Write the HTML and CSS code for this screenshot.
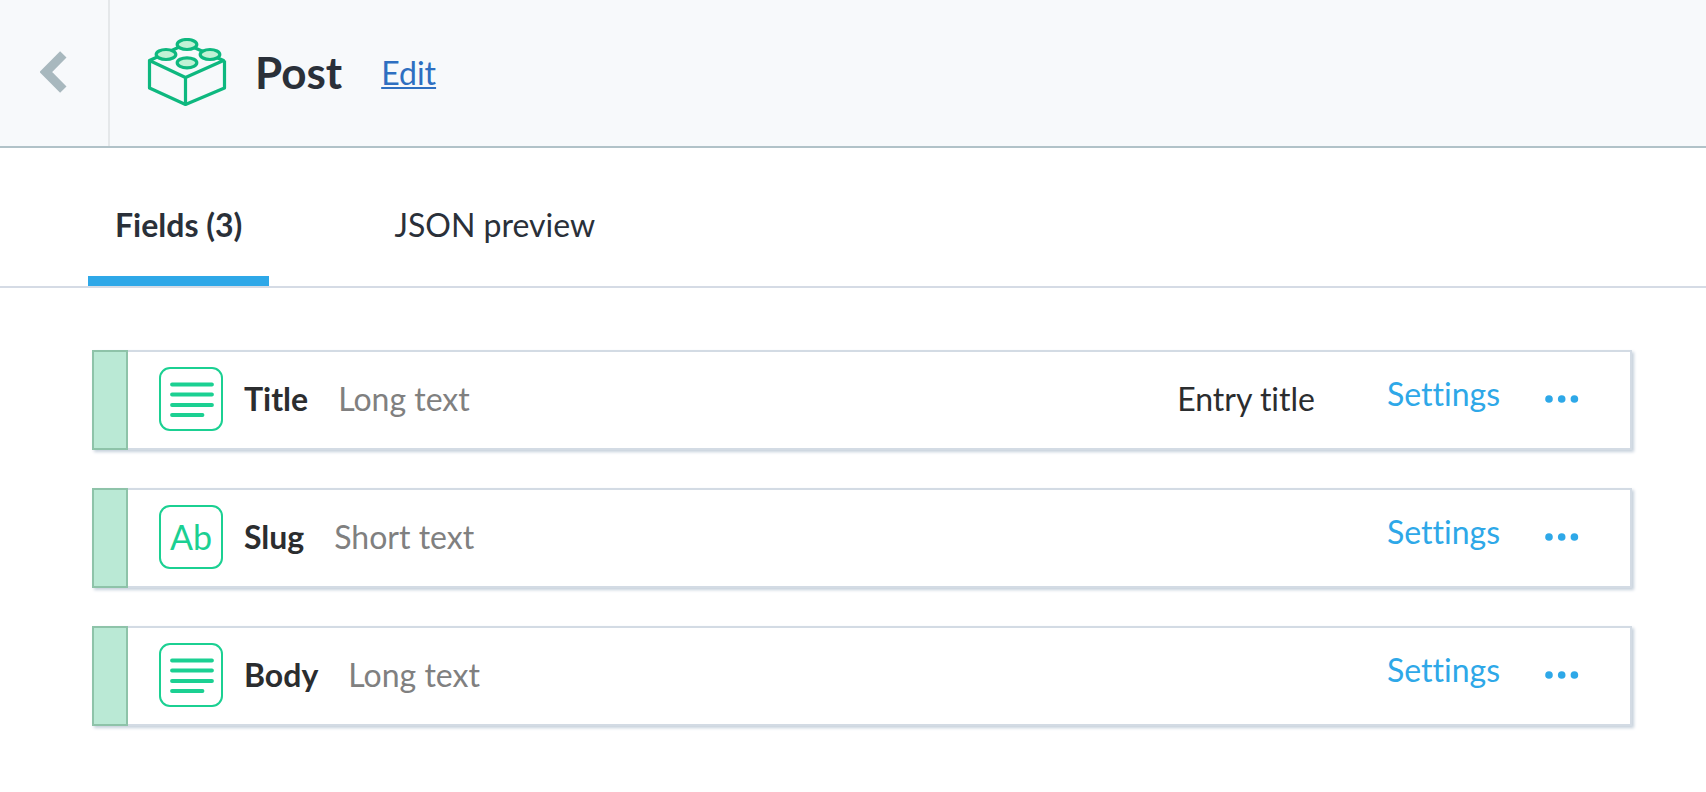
FILE: index.html
```html
<!DOCTYPE html>
<html lang="en">
<head>
<meta charset="utf-8">
<meta name="viewport" content="width=device-width, initial-scale=1">
<title>Post</title>
<link rel="stylesheet" href="styles.css">
</head>
<body>
<header class="topbar">
  <button class="back" type="button" aria-label="Back">
    <svg width="28" height="44" viewBox="0 0 28 44" fill="none"><path d="M23.300 4.300L5.800 22L23.300 39.700" stroke="#a8b8be" stroke-width="9" stroke-linejoin="miter"/></svg>
  </button>
  <div class="heading">
    <svg class="brick" width="80" height="70" viewBox="0 0 80 70" fill="none" stroke="#0eb87f" stroke-width="3.200" stroke-linejoin="round">
      <path d="M2.500 22.500L39 6L76.500 22.500L38.500 39.500Z"/>
      <path d="M2.500 22.500V50L38.500 66.500L77.500 50V22.500M38.500 39.500V66.500"/>
      <g fill="#c1f2d5">
        <ellipse cx="40" cy="6.500" rx="9.800" ry="5"/>
        <ellipse cx="19" cy="16.500" rx="9.800" ry="5"/>
        <ellipse cx="63" cy="16.500" rx="9.800" ry="5"/>
        <ellipse cx="40" cy="24.800" rx="9.800" ry="5"/>
      </g>
    </svg>
    <h1 class="title">Post</h1>
    <a class="edit" href="#">Edit</a>
  </div>
</header>
<nav class="tabs">
  <a class="tab tab-active" href="#" aria-current="page">Fields (3)</a>
  <a class="tab" href="#">JSON preview</a>
</nav>
<main>
  <ul class="fields">
    <li class="field">
      <span class="handle"></span>
      <svg class="type-icon" width="64" height="64" viewBox="0 0 64 64" fill="none" stroke="#1bd092"><rect x="1" y="1" width="62" height="62" rx="10" stroke-width="2"/><path d="M13 17.500H53M13 27.500H53M13 38H53M13 48H43.500" stroke-width="3.800" stroke-linecap="round"/></svg>
      <strong class="name">Title</strong>
      <span class="type">Long text</span>
      <span class="note">Entry title</span>
      <button class="settings" type="button">Settings</button>
      <button class="more" type="button" aria-label="More actions"><svg width="34" height="8" viewBox="0 0 34 8" fill="#2ea8e8"><circle cx="4" cy="4" r="3.800"/><circle cx="16.700" cy="4" r="3.800"/><circle cx="29.400" cy="4" r="3.800"/></svg></button>
    </li>
    <li class="field">
      <span class="handle"></span>
      <span class="type-icon type-short">Ab</span>
      <strong class="name">Slug</strong>
      <span class="type">Short text</span>
      <button class="settings" type="button">Settings</button>
      <button class="more" type="button" aria-label="More actions"><svg width="34" height="8" viewBox="0 0 34 8" fill="#2ea8e8"><circle cx="4" cy="4" r="3.800"/><circle cx="16.700" cy="4" r="3.800"/><circle cx="29.400" cy="4" r="3.800"/></svg></button>
    </li>
    <li class="field">
      <span class="handle"></span>
      <svg class="type-icon" width="64" height="64" viewBox="0 0 64 64" fill="none" stroke="#1bd092"><rect x="1" y="1" width="62" height="62" rx="10" stroke-width="2"/><path d="M13 17.500H53M13 27.500H53M13 38H53M13 48H43.500" stroke-width="3.800" stroke-linecap="round"/></svg>
      <strong class="name">Body</strong>
      <span class="type">Long text</span>
      <button class="settings" type="button">Settings</button>
      <button class="more" type="button" aria-label="More actions"><svg width="34" height="8" viewBox="0 0 34 8" fill="#2ea8e8"><circle cx="4" cy="4" r="3.800"/><circle cx="16.700" cy="4" r="3.800"/><circle cx="29.400" cy="4" r="3.800"/></svg></button>
    </li>
  </ul>
</main>
</body>
</html>
```
FILE: styles.css
```css
* { box-sizing: border-box; }

body {
  margin: 0;
  background: #fff;
  color: #2a3039;
  font-family: Lato, "Open Sans", sans-serif;
  font-size: 32px;
  font-variant-ligatures: none;
  line-height: 40px;
}

button {
  padding: 0;
  border: 0;
  background: none;
  font: inherit;
  font-variant-ligatures: none;
  cursor: pointer;
}

.topbar {
  display: flex;
  height: 148px;
  background: #f7f9fb;
  border-bottom: 2px solid #b1c2c8;
}

.back {
  display: flex;
  align-items: center;
  width: 110px;
  padding-left: 40px;
  padding-bottom: 3px;
  border-right: 2px solid #e5e8ea;
}

.heading {
  display: flex;
  align-items: center;
  padding-left: 37px;
}

.brick { margin-right: 28px; }

.title {
  margin: 0 39px 0 0;
  padding-bottom: 2px;
  font-size: 44px;
  font-weight: 700;
  line-height: 56px;
}

.edit {
  color: #2e6fc1;
  text-decoration-thickness: 2px;
  text-underline-offset: 2px;
  text-decoration-skip-ink: none;
}

.tabs {
  display: flex;
  gap: 98px;
  height: 140px;
  padding-left: 88px;
  border-bottom: 2px solid #d5dbe5;
}

.tab {
  padding: 57px 27px 0;
  color: inherit;
  text-decoration: none;
}

.tab-active {
  border-bottom: 10px solid #2ea8e8;
  font-weight: 700;
}

.fields {
  display: flex;
  flex-direction: column;
  gap: 38px;
  margin: 0;
  padding: 62px 74px 62px 92px;
  list-style: none;
}

.field {
  display: flex;
  align-items: center;
  height: 100px;
  padding-right: 51px;
  background: linear-gradient(#d3dbe4, #d3dbe4) top / 100% 2px no-repeat #fff;
  border-right: 2px solid #d3dbe4;
  border-bottom: 2px solid #d3dbe4;
  box-shadow: 2px 2px 3px #c6d1dc;
  color: #2b2d2f;
}

.handle {
  align-self: stretch;
  width: 36px;
  margin: 0 31px -2px 0;
  background: #bae9d5;
  border: 2px solid #8ec3a9;
}

.type-icon {
  flex: none;
  width: 64px;
  height: 64px;
  margin-right: 21px;
}

.type-short {
  display: flex;
  align-items: center;
  justify-content: center;
  border: 2px solid #1bd092;
  border-radius: 11px;
  color: #1bd092;
  font-size: 34px;
}

.name { margin-right: 30px; }

.type {
  margin-right: auto;
  color: #808080;
}

.note { margin-right: 72px; }

.settings {
  padding-bottom: 10px;
  color: #2ea8e8;
}

.more {
  display: flex;
  margin-left: 45px;
}
```
